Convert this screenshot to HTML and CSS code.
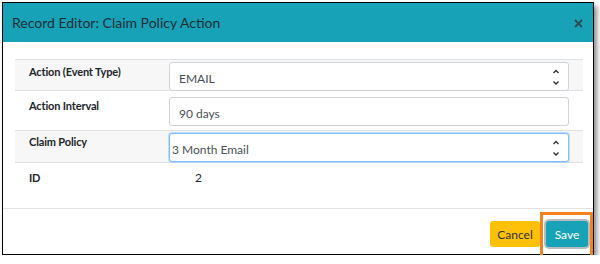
FILE: index.html
```html
<!DOCTYPE html>
<html lang="en">
<head>
  <meta charset="UTF-8">
  <title>Record Editor: Claim Policy Action</title>
  <link rel="stylesheet" href="styles.css">
</head>
<body>
  <div class="modal">
    <div class="modal-header">
      <h1 class="modal-title">Record Editor: Claim Policy Action</h1>
      <button class="close" aria-label="Close">
        <svg width="9" height="9" viewBox="0 0 9 9"><path d="M1 1L8 8M8 1L1 8" /></svg>
      </button>
    </div>
    <div class="modal-body">
      <div class="fields">
        <div class="row striped row-1">
          <div class="label">Action (Event Type)</div>
          <div class="field">
            <div class="control select">
              <span>EMAIL</span>
              <svg class="arrows" width="8" height="18" viewBox="0 0 8 18"><path d="M1.5 5L4 2.5L6.5 5M1.5 13.5L4 16L6.5 13.5" /></svg>
            </div>
          </div>
        </div>
        <div class="row row-2">
          <div class="label">Action Interval</div>
          <div class="field">
            <div class="control">90 days</div>
          </div>
        </div>
        <div class="row striped row-3">
          <div class="label">Claim Policy</div>
          <div class="field">
            <div class="control select focused">
              <span>3 Month Email</span>
              <svg class="arrows" width="8" height="18" viewBox="0 0 8 18"><path d="M1.5 5L4 2.5L6.5 5M1.5 13.5L4 16L6.5 13.5" /></svg>
            </div>
          </div>
        </div>
        <div class="row row-4">
          <div class="label">ID</div>
          <div class="field value">2</div>
        </div>
      </div>
    </div>
    <div class="modal-footer">
      <button class="btn btn-cancel">Cancel</button>
      <span class="highlight">
        <button class="btn btn-save">Save</button>
      </span>
    </div>
  </div>
</body>
</html>
```

FILE: styles.css
```css
body {
  margin: 0;
  font-family: Lato, "Open Sans", sans-serif;
  color: #212529;
  background: #fff;
}
.modal {
  margin: 2px 0 0 2px;
  width: 590px;
  height: 251px;
  border: 1px solid #000;
  background: #fff;
  box-shadow: 3px 4px 5px rgba(0, 0, 0, 0.45);
  display: flex;
  flex-direction: column;
}
.modal-header {
  height: 39px;
  background: #17a2b8;
  display: flex;
  align-items: center;
  justify-content: space-between;
  padding: 0 10px 0 9px;
}
.modal-title {
  margin: 0;
  font-size: 14px;
  font-weight: normal;
  color: #1e2f33;
}
.close {
  border: 0;
  background: none;
  padding: 0;
  margin: 2px 0 0 0;
  display: flex;
}
.close path {
  stroke: #2b4b52;
  stroke-width: 1.8;
  fill: none;
}
.modal-body {
  height: 149px;
  padding: 17px 10px 0 12px;
  border-bottom: 1px solid #e2e2e2;
}
.fields {
  font-size: 12px;
}
.row {
  display: flex;
  border-top: 1px solid #dee2e6;
}
.row.striped {
  background: #f7f7f7;
}
.row-1 { height: 30px; }
.row-2 { height: 39px; }
.row-3 { height: 31px; border-bottom: 1px solid #dee2e6; }
.row-4 { height: 30px; border-top: 0; }
.label {
  width: 140px;
  padding: 3px 0 0 14px;
  font-size: 11px;
  font-weight: bold;
  letter-spacing: -0.15px;
  line-height: 16px;
}
.row-2 .label, .row-4 .label { padding-top: 7px; }
.row-1 .label { padding-top: 4px; }
.field {
  flex: 1;
  padding: 2px 14px 0 0;
}
.row-2 .field { padding-top: 6px; }
.value {
  padding: 7px 0 0 26px;
  line-height: 16px;
}
.control {
  height: 24px;
  border: 1px solid #ced4da;
  border-radius: 3px;
  background: #fff;
  padding: 3px 8px 0 9px;
  display: flex;
  align-items: center;
  justify-content: space-between;
  color: #495057;
}
.control.focused {
  border-color: #80bdff;
  box-shadow: 0 0 0 1px rgba(128, 189, 255, 0.45);
  padding-left: 2px;
}
.arrows {
  margin-top: -3px;
}
.arrows path {
  stroke: #333;
  stroke-width: 1.4;
  fill: none;
}
.modal-footer {
  flex: 1;
  display: flex;
  justify-content: flex-end;
  align-items: flex-start;
  padding: 12px 5px 0 0;
  gap: 6px;
}
.btn {
  height: 26px;
  border: 0;
  border-radius: 3px;
  font-family: Lato, "Open Sans", sans-serif;
  font-size: 12px;
  padding: 0 6px;
}
.btn-cancel {
  width: 50px;
  background: #ffc107;
  color: #333;
}
.highlight {
  position: relative;
  display: flex;
}
.btn-save {
  width: 42px;
  background: #17a2b8;
  color: #fff;
  box-shadow: 0 0 0 2px #b9bcbe;
}
.highlight::after {
  content: "";
  position: absolute;
  left: -6px;
  right: -5px;
  top: -9px;
  bottom: -14px;
  border: 3px solid #f5821f;
}
```
